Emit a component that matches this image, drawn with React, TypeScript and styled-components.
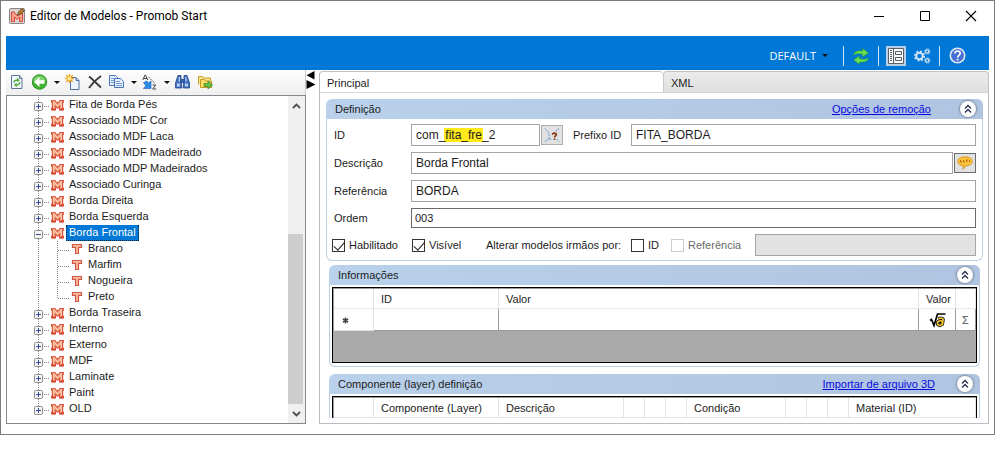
import React from "react";
import styled, { createGlobalStyle } from "styled-components";

const GlobalStyle = createGlobalStyle`
  * { box-sizing: border-box; }
  body {
    margin: 0;
    background: #fff;
    color: #1c1c1c;
    font-family: "Liberation Sans", Arial, sans-serif;
    font-size: 11px;
    line-height: 16px;
  }
  button, input { font: inherit; color: inherit; margin: 0; }
`;

/* ---------- window frame ---------- */

const Window = styled.main`
  display: flex;
  flex-direction: column;
  height: calc(100vh - 20px);
  min-height: 300px;
  margin-right: 8px;
  padding: 0 5px 10px;
  border: 1px solid #7b7b7b;
`;

const TitleBar = styled.header`
  display: flex;
  align-items: center;
  flex: none;
  height: 35px;
  padding: 0 1px 6px 3px;
`;

const Title = styled.h1`
  flex: 1;
  margin: 0 0 0 5px;
  font: 400 12px/16px Roboto, "Open Sans", sans-serif;
  color: #000;
`;

const FrameButton = styled.button`
  display: flex;
  align-items: center;
  justify-content: center;
  width: 46px;
  height: 28px;
  padding: 0;
  border: 0;
  background: transparent;
  &:last-child { width: 34px; margin-left: 6px; }
`;

const CommandBar = styled.div`
  display: flex;
  align-items: center;
  justify-content: flex-end;
  flex: none;
  height: 34px;
  padding: 5px 22px 0 0;
  background: #0078d7;
`;

const CommandButton = styled.button<{ $active?: boolean }>`
  display: flex;
  align-items: center;
  justify-content: center;
  width: 20px;
  height: 20px;
  padding: 0;
  border: 0;
  background: ${(p) => (p.$active ? "#b9cfe6" : "transparent")};
  & + & { margin-left: 6px; }
`;

const ProfileButton = styled.button`
  display: flex;
  align-items: center;
  gap: 6px;
  margin-right: 8px;
  padding: 0;
  border: 0;
  background: transparent;
  color: #fff;
  font: 400 11px/16px "Open Sans", "Noto Sans", sans-serif;
`;

const Separator = styled.span`
  width: 1px;
  height: 20px;
  margin: 0 7px;
  background: #cfe6fa;
`;

const Caret = styled.span`
  width: 0;
  height: 0;
  border: 3px solid transparent;
  border-top-color: #111;
  border-bottom: 0;
`;

const Workspace = styled.div`
  display: flex;
  flex: 1;
  min-height: 0;
`;

/* ---------- model tree ---------- */

const Sidebar = styled.aside`
  display: flex;
  flex-direction: column;
  flex: 0 0 300px;
  min-width: 0;
`;

const Toolbar = styled.div`
  display: flex;
  align-items: center;
  flex: none;
  height: 25px;
  padding: 0 4px 1px;
  border-right: 1px solid #c9c9c9;
  background: linear-gradient(#fdfdfd, #efefef);
`;

const ToolButton = styled.button<{ $menu?: boolean }>`
  display: flex;
  align-items: center;
  justify-content: space-between;
  width: ${(p) => (p.$menu ? "28px" : "16px")};
  height: 20px;
  margin-right: ${(p) => (p.$menu ? "5px" : "6px")};
  padding: 0;
  border: 0;
  background: transparent;
  svg { flex: none; }
`;

const TreeFrame = styled.div`
  display: flex;
  flex: 1;
  min-height: 0;
  border: 1px solid #828790;
`;

const Tree = styled.ul`
  flex: 1;
  min-width: 0;
  margin: 0;
  padding: 1px 0 0 26px;
  overflow: hidden;
  list-style: none;
`;

const TreeRow = styled.li`
  display: flex;
  align-items: center;
  height: 16px;
`;

const TreeLabel = styled.span<{ $selected?: boolean }>`
  margin-left: 2px;
  padding: 0 2px 1px;
  border: 1px dotted ${(p) => (p.$selected ? "#10233a" : "transparent")};
  border-width: 0 1px 1px;
  line-height: 14px;
  background: ${(p) => (p.$selected ? "#0078d7" : "transparent")};
  color: ${(p) => (p.$selected ? "#fff" : "#1c1c1c")};
  white-space: nowrap;
`;

const ScrollBar = styled.div`
  display: flex;
  flex-direction: column;
  flex: 0 0 17px;
  align-items: stretch;
  background: #f0f0f0;
`;

const ScrollArrow = styled.button`
  display: flex;
  align-items: center;
  justify-content: center;
  height: 19px;
  padding: 0;
  border: 0;
  background: transparent;
`;

const ScrollTrack = styled.div`
  display: flex;
  flex-direction: column;
  flex: 1;
  justify-content: flex-end;
  padding-right: 2px;
`;

const ScrollThumb = styled.div`
  height: 59%;
  background: #cdcdcd;
`;

const Splitter = styled.div`
  display: flex;
  flex-direction: column;
  align-items: center;
  flex: 0 0 13px;
  padding: 1px 3px 0 0;
`;

/* ---------- tabs and panels ---------- */

const Content = styled.section`
  display: flex;
  flex-direction: column;
  flex: 1;
  min-width: 0;
  padding-top: 1px;
`;

const TabList = styled.div`
  display: flex;
  flex: none;
  height: 22px;
`;

const Tab = styled.button<{ $active?: boolean }>`
  flex: ${(p) => (p.$active ? "345 0 0" : "325 0 0")};
  padding: 2px 7px 0;
  border: 1px solid #c3c3c3;
  border-bottom-color: #d5d5d5;
  border-left-color: ${(p) => (p.$active ? "#b5bac2" : "#c9c9c9")};
  border-right-width: ${(p) => (p.$active ? "0" : "1px")};
  border-radius: 4px 4px 0 0;
  background: ${(p) => (p.$active ? "#fff" : "linear-gradient(#ececec, #dfdfdf)")};
  text-align: left;
`;

const TabPage = styled.div`
  flex: 1;
  min-height: 0;
  padding: 6px 5px 5px 6px;
  border: 1px solid #b9bdc4;
  border-top: 0;
`;

const ScrollArea = styled.div`
  height: 100%;
  overflow: hidden;
`;

const PanelHeader = styled.header`
  display: flex;
  align-items: center;
  height: 20px;
  padding: 0 7px 0 9px;
  border-radius: 6px 6px 0 0;
  background: linear-gradient(90deg, #b9d1ea, #afc4e0);
`;

const PanelTitle = styled.h2`
  flex: 1;
  margin: 0;
  font-size: 11px;
  font-weight: 400;
`;

const PanelLink = styled.a`
  margin-right: 29px;
  color: #0a0ae0;
`;

const Panel = styled.section<{ $inset?: boolean }>`
  margin: ${(p) => (p.$inset ? "0 3px 7px" : "0 0 4px")};
  ${PanelLink} { margin-right: ${(p) => (p.$inset ? "22px" : "29px")}; }
`;

const CollapseButton = styled.button`
  display: flex;
  align-items: center;
  justify-content: center;
  width: 16px;
  height: 16px;
  padding: 0;
  border: 0;
  border-radius: 50%;
  background: #fff;
  box-shadow: 0 0 2px 1px #7f8ba5;
`;

const FormBody = styled.form`
  display: flex;
  flex-direction: column;
  gap: 6px;
  padding: 5px 6px 4px 5px;
  border: 1px solid #b9cfe6;
  border-top: 0;
  border-radius: 0 0 6px 6px;
`;

const GridBody = styled.div`
  padding: 2px 2px 3px;
  border: 1px solid #b9cfe6;
  border-top: 0;
  border-radius: 0 0 6px 6px;
`;

const FieldRow = styled.div`
  display: flex;
  align-items: center;
`;

const FieldLabel = styled.label<{ $inline?: boolean }>`
  flex: none;
  width: ${(p) => (p.$inline ? "58px" : "79px")};
  margin-left: ${(p) => (p.$inline ? "10px" : "0")};
  padding-left: ${(p) => (p.$inline ? "0" : "2px")};
`;

const TextField = styled.input<{ $narrow?: boolean; $compact?: boolean; $marked?: boolean }>`
  flex: ${(p) => (p.$narrow ? "0 0 129px" : "1")};
  min-width: 0;
  height: ${(p) => (p.$compact ? "20px" : "22px")};
  padding: ${(p) => (p.$compact ? "0 3px" : "0 4px")};
  border: 1px solid ${(p) => (p.$compact ? "#6f6a6a" : "#a7a4a4")};
  border-radius: 0;
  background: ${(p) =>
    p.$marked ? "linear-gradient(#ffe91a, #ffe91a) 32px 3px / 39px 14px no-repeat #fff" : "#fff"};
  font-size: ${(p) => (p.$compact ? "11px" : "12px")};
  &:disabled { background: #e2e2e2; }
`;

const FieldButton = styled.button<{ $dark?: boolean }>`
  display: flex;
  align-items: center;
  justify-content: center;
  flex: none;
  width: 22px;
  height: 20px;
  margin-left: 1px;
  padding: 0;
  border: 1px solid ${(p) => (p.$dark ? "#6d6d6d" : "#adadad")};
  background: #e1e1e1;
`;

const CheckLabel = styled.label<{ $width: number; $muted?: boolean }>`
  display: flex;
  align-items: center;
  gap: 4px;
  flex: none;
  width: ${(p) => p.$width}px;
  color: ${(p) => (p.$muted ? "#6a6a6a" : "#1c1c1c")};
`;

const CheckBox = styled.input`
  appearance: none;
  display: flex;
  justify-content: center;
  width: 13px;
  height: 13px;
  border: 1px solid #333;
  background: #fff;
  &:disabled { border-color: #ccc; }
  &:checked::after {
    content: "";
    width: 5px;
    height: 9px;
    border: solid #222;
    border-width: 0 1px 1px 0;
    transform: rotate(42deg);
  }
`;

const CheckHeading = styled.span`
  flex: none;
  width: 145px;
`;

const GridFrame = styled.div`
  height: 76px;
  overflow: hidden;
  border: 1px solid #000;
  background: #aaa;
`;

const Grid = styled.table`
  width: 100%;
  table-layout: fixed;
  border-collapse: separate;
  border-spacing: 0;
  border-top: 1px solid #9a9a9a;
  border-left: 1px solid #9a9a9a;
  background: #fff;
  th, td {
    padding: 0 7px;
    border-right: 1px solid #e2e2e2;
    border-bottom: 1px solid #e8e8e8;
    text-align: left;
    font-weight: 400;
    white-space: nowrap;
  }
  th { height: 20px; }
  td {
    height: 22px;
    padding: 0;
    border-color: #9c9c9c;
    text-align: center;
  }
  td:first-child {
    padding: 2px 0 0 8px;
    border-color: #e2e2e2;
  }
  td:last-child { color: #555; }
  svg { display: block; }
  td + td svg { margin: 0 auto; }
`;

const Col = styled.col<{ $w?: number }>`
  width: ${(p) => (p.$w ? `${p.$w}px` : "auto")};
`;

/* ---------- icons ---------- */

const AppIcon = () => (
  <svg width="16" height="16" viewBox="0 0 16 16">
    <rect x=".5" y=".5" width="15" height="15" rx="1" fill="#d8d3d0" stroke="#8a8583" />
    <path d="M2.500 13.500V4H5l3 3.500L11 4h2.500v9.500h-3V9L8 11.500 5.500 9v4.500z" fill="#f7a08d" stroke="#dd4636" />
    <path d="M8.500 7.500l1-3.500L13 .5l2.500 2L12 6z" fill="#b07a30" stroke="#5d3a17" strokeWidth=".8" />
  </svg>
);

const MinimizeIcon = () => (
  <svg width="12" height="12" viewBox="0 0 12 12"><path d="M1 6.500h10" stroke="#000" /></svg>
);
const MaximizeIcon = () => (
  <svg width="12" height="12" viewBox="0 0 12 12"><path d="M1.500 1.500h9v9h-9z" fill="none" stroke="#000" /></svg>
);
const CloseIcon = () => (
  <svg width="12" height="12" viewBox="0 0 12 12"><path d="M1 1l10 10M11 1L1 11" stroke="#000" strokeWidth="1.100" /></svg>
);

const SyncIcon = () => (
  <svg width="18" height="18" viewBox="0 0 18 18">
    <g fill="#6be04f" stroke="#1f8a3c" strokeWidth=".6">
      <path d="M1.500 8.500C1.800 4.500 6 3.300 10.500 4V1.300L16.500 6l-6 4V7.200C6.500 6.300 3.800 6.300 1.500 8.500z" />
      <path d="M16.500 10.500c-.3 4-4.500 5.200-9 4.500v2.500L1.500 13l6-4.200v2.800c4 .9 6.700.9 9-1.100z" />
    </g>
  </svg>
);

const FormIcon = () => (
  <svg width="16" height="16" viewBox="0 0 16 16" fill="#fafafa" stroke="#5b5f66">
    <path d="M.5.5h15v15H.5zM5.500.5v15" />
    <path d="M7.500 3.500h6v3h-6zM7.500 9.500h6v3h-6z" />
    <path d="M2 2.500h2M2 4.500h2M2 6.500h2M2 8.500h2M2 10.500h2M2 12.500h2" />
  </svg>
);

const GearsIcon = () => (
  <svg width="17" height="16" viewBox="0 0 17 16" fill="none" stroke="#d3e6f7">
    <circle cx="5.500" cy="8" r="3.300" strokeWidth="2" />
    <circle cx="5.500" cy="8" r="4.700" strokeWidth="1.800" strokeDasharray="1.850 1.840" />
    <circle cx="13.300" cy="3.500" r="1.700" strokeWidth="1.300" />
    <circle cx="13.300" cy="3.500" r="2.700" strokeWidth=".9" strokeDasharray="1.100 1.020" />
    <circle cx="13.300" cy="12.500" r="1.700" strokeWidth="1.300" />
    <circle cx="13.300" cy="12.500" r="2.700" strokeWidth=".9" strokeDasharray="1.100 1.020" />
  </svg>
);

const HelpIcon = () => (
  <svg width="17" height="17" viewBox="0 0 17 17">
    <circle cx="8.500" cy="8.500" r="7.200" fill="#4470d6" stroke="#dfe6f2" strokeWidth="1.600" />
    <path d="M5.800 6.600C5.800 3 11.400 3.300 11.200 6.400 11 8.400 8.600 8.300 8.600 10.400M8.600 11.800v1.700" fill="none" stroke="#fff" strokeWidth="1.700" />
  </svg>
);

const RefreshPageIcon = () => (
  <svg width="16" height="16" viewBox="0 0 16 16">
    <path d="M1.500 1.500h8l2.500 3v10H1.500z" fill="#f1f7ff" stroke="#5f7695" />
    <path d="M9.500 1.500v3H12" fill="none" stroke="#5f7695" />
    <path d="M4 8.500c0-2 1.500-2.500 3.500-2.300M9.800 8c0 2-1.500 3.200-3.500 2.800" fill="none" stroke="#49a832" strokeWidth="1.400" />
    <path d="M7 3.800l2.700 2.400L7 8.200zM6.700 8.800L4 11l2.700 2.300z" fill="#49a832" />
  </svg>
);

const BackIcon = () => (
  <svg width="16" height="16" viewBox="0 0 16 16">
    <circle cx="7.500" cy="8" r="7.300" fill="#3fb52f" stroke="#24871d" strokeWidth=".8" />
    <path d="M1.500 7a6 5 0 0 1 12 0z" fill="#83d570" />
    <path d="M2 8l5.500-5v3.200H12.500v3.600h-5V13z" fill="#fff" />
  </svg>
);

const NewPageIcon = () => (
  <svg width="16" height="16" viewBox="0 0 16 16">
    <path d="M5.500 3.500h5.500l3 3v9H5.500z" fill="#edf4fc" stroke="#5270a0" />
    <path d="M11 3.500v3h3" fill="#b8cce8" stroke="#5270a0" />
    <path d="M4.500 0v9M0 4.500h9M1.300 1.300l6.400 6.400M7.700 1.300L1.300 7.700" stroke="#f0a321" strokeWidth="1.500" />
    <circle cx="4.500" cy="4.500" r="2" fill="#ffe487" />
  </svg>
);

const DeleteIcon = () => (
  <svg width="16" height="16" viewBox="0 0 16 16">
    <path d="M2 2.500c4 3 8 7.500 12 11M14 2C9.500 5 5 9.500 2 14" fill="none" stroke="#3c3c3c" strokeWidth="1.900" />
  </svg>
);

const CopyIcon = () => (
  <svg width="16" height="16" viewBox="0 0 16 16" fill="#e5effb" stroke="#4a74b8">
    <path d="M.5 1.500h6l2 2v8h-8z" />
    <path d="M2 4.500h4M2 6.500h4M2 8.500h4" stroke="#7ba0d6" />
    <path d="M5.500 4.500h6l3 3v6h-9z" />
    <path d="M7 7.500h4M7 9.500h6M7 11.500h6" stroke="#7ba0d6" />
  </svg>
);

const SortIcon = () => (
  <svg width="16" height="16" viewBox="0 0 16 16">
    <path d="M.8 6L3 1h.5l2.200 5M2 4.500h3" fill="none" stroke="#444" />
    <path d="M10.500 11h3.200l-3 4h3.500" fill="none" stroke="#444" />
    <path d="M6.500 3l6 6" stroke="#444" strokeDasharray="1.500 1" />
    <path d="M1.500 8.500L5 7l1.500 2L9 7v7.500H1.500l2.300-2.700z" fill="#2f8be8" stroke="#1c5fb4" strokeWidth=".6" />
  </svg>
);

const BinocularsIcon = () => (
  <svg width="16" height="16" viewBox="0 0 16 16" fill="#4272c0" stroke="#1e4184" strokeWidth=".8">
    <path d="M3 1.500h3v3.500l.8 9H.5V9zM9 1.500h3L14.500 9v5H8.200l.8-9z" />
    <path d="M6 5.500h3v3H6z" />
    <path d="M2 9.500h2.800v3H2zM10 9.500h2.800v3H10zM3.800 3H5v4.500H3.800zM10.300 3h1.200v4.500h-1.200z" fill="#bcd5f5" stroke="none" />
  </svg>
);

const FolderIcon = () => (
  <svg width="16" height="16" viewBox="0 0 16 16">
    <path d="M1.500 10.500v-8h4l1 1.500h7v2" fill="#fbe78f" stroke="#c79a25" />
    <path d="M3.500 13.500v-8h4l1 1.500h6v6.500z" fill="#fcdf68" stroke="#c79a25" />
    <path d="M7 9.500h4V7l4.700 4-4.700 4v-2.500H7z" fill="#67c043" stroke="#37842a" strokeWidth=".7" />
  </svg>
);

const ModelIcon = () => (
  <svg width="13" height="13" viewBox="0 0 13 13">
    <path
      d="M.6 11V9.300h.8V3.200H.6V1.500h3.200l2.700 3 2.700-3h3.200v1.700h-.8v6.100h.8V11H8.600V7L6.500 9.200 4.400 7v4z"
      fill="#fac29c"
      stroke="#dc5544"
      strokeWidth="1.200"
    />
    <path d="M1 10.400h3.200M8.800 10.400H12" stroke="#d2402f" strokeWidth="1.600" />
  </svg>
);

const MaterialIcon = () => (
  <svg width="12" height="12" viewBox="0 0 12 12">
    <path d="M1.500 1.500h9v2.800H7.500v6.200h-3V4.300h-3z" fill="#fbbd9b" stroke="#cd5847" strokeWidth="1.200" />
  </svg>
);

type BranchKind = "closed" | "open" | "child" | "lastChild";

/* Dotted guide lines, with the plus/minus box on expandable nodes. */
const Branch = ({ kind, last }: { kind: BranchKind; last?: boolean }) => {
  const child = kind === "child" || kind === "lastChild";
  const width = child ? 38 : 18;
  return (
    <svg width={width} height="16" viewBox={`0 0 ${width} 16`} fill="none" stroke="#858585">
      {!child || kind ? <path d={last ? "M5.500 0v9" : "M5.500 0v16"} strokeDasharray="1 1" /> : null}
      {child ? (
        <path
          d={kind === "child" ? "M24.500 0v16M25 9.500h11" : "M24.500 0v9M25 9.500h11"}
          strokeDasharray="1 1"
        />
      ) : (
        <>
          <path d="M11 9.500h6" strokeDasharray="1 1" />
          <rect x="1.500" y="5.500" width="8" height="8" rx="1" fill="#f5f5f5" stroke="#8d8d8d" />
          <path d={kind === "closed" ? "M3 9.500h5M5.500 7v5" : "M3 9.500h5"} stroke="#34498f" />
        </>
      )}
    </svg>
  );
};

const ScrollChevron = ({ down }: { down?: boolean }) => (
  <svg width="9" height="8" viewBox="0 0 9 8">
    <path d={down ? "M1 2l3.500 3.500L8 2" : "M1 6l3.500-3.500L8 6"} fill="none" stroke="#505050" strokeWidth="1.800" />
  </svg>
);

const CollapseIcon = () => (
  <svg width="8" height="10" viewBox="0 0 8 10">
    <path d="M1 4.500l3-3 3 3M1 8.500l3-3 3 3" fill="none" stroke="#26304f" strokeWidth="1.300" />
  </svg>
);

const SplitterArrows = () => (
  <svg width="10" height="18" viewBox="0 0 10 18">
    <path d="M8.500 0v8.500L.5 4.300zM.5 9l9 4.500-9 4.500z" fill="#000" />
  </svg>
);

const FormulaHelpIcon = () => (
  <svg width="16" height="16" viewBox="0 0 16 16" fill="none">
    <path d="M1 1.500l4 4.500v6M1 14.500l4-2.500h3M15 1.500L11 5M12.500 12l2.500 2.500" stroke="#4a86d0" strokeDasharray="1.500 1" />
    <path d="M8.500 7.800C8.500 5.500 12.500 5.500 12.300 7.800 12 9 10.500 9 10.500 10.600M10.500 11.500v1.500" stroke="#8a3a14" strokeWidth="1.700" />
  </svg>
);

const BalloonIcon = () => (
  <svg width="16" height="14" viewBox="0 0 16 14">
    <path d="M8 .8c4.500 0 7.300 1.700 7.300 4.500S12.500 9.800 9 9.800L6 13.200 6.300 9.800C3 9.500.7 8 .7 5.300S3.500.8 8 .8z" fill="#fcc237" stroke="#cf8a1e" strokeWidth=".8" />
    <path d="M3.500 4v2h1.500M6.500 4v2H8M9.500 6V4H11M12.500 4v2" fill="none" stroke="#b5651a" strokeWidth=".9" />
  </svg>
);

const RootIcon = () => (
  <svg width="17" height="16" viewBox="0 0 17 16" fill="none">
    <path d="M1 8.500l1.500-1L5 13.500 8.500 2h8" stroke="#000" strokeWidth="1.700" />
    <ellipse cx="11" cy="11" rx="2.600" ry="2.200" stroke="#000" strokeWidth="3.400" transform="rotate(-25 11 11)" />
    <path d="M9.500 6.800c2-1.200 5-.8 4.600 1.200l-1 5.300" stroke="#000" strokeWidth="3.200" />
    <ellipse cx="11" cy="11" rx="2.600" ry="2.200" stroke="#f1c332" strokeWidth="1.600" transform="rotate(-25 11 11)" />
    <path d="M9.500 6.800c2-1.200 5-.8 4.600 1.200l-1 5.300" stroke="#f1c332" strokeWidth="1.600" />
    <path d="M10.300 11.400l1.600-.9" stroke="#000" strokeWidth="1.200" />
  </svg>
);

const NewRowIcon = () => (
  <svg width="7" height="7" viewBox="0 0 7 7">
    <path d="M3.500 .5v6M.9 2l5.200 3M6.100 2L.9 5" stroke="#444" strokeWidth="1.600" />
  </svg>
);

/* ---------- data ---------- */

type Node = { label: string; kind: BranchKind; selected?: boolean };

const nodes: Node[] = [
  { label: "Fita de Borda Pés", kind: "closed" },
  { label: "Associado MDF Cor", kind: "closed" },
  { label: "Associado MDF Laca", kind: "closed" },
  { label: "Associado MDF Madeirado", kind: "closed" },
  { label: "Associado MDP Madeirados", kind: "closed" },
  { label: "Associado Curinga", kind: "closed" },
  { label: "Borda Direita", kind: "closed" },
  { label: "Borda Esquerda", kind: "closed" },
  { label: "Borda Frontal", kind: "open", selected: true },
  { label: "Branco", kind: "child" },
  { label: "Marfim", kind: "child" },
  { label: "Nogueira", kind: "child" },
  { label: "Preto", kind: "lastChild" },
  { label: "Borda Traseira", kind: "closed" },
  { label: "Interno", kind: "closed" },
  { label: "Externo", kind: "closed" },
  { label: "MDF", kind: "closed" },
  { label: "Laminate", kind: "closed" },
  { label: "Paint", kind: "closed" },
  { label: "OLD", kind: "closed" },
];

const tools: { name: string; icon: React.ReactNode; menu?: boolean }[] = [
  { name: "Atualizar", icon: <RefreshPageIcon /> },
  { name: "Voltar", icon: <BackIcon />, menu: true },
  { name: "Novo", icon: <NewPageIcon /> },
  { name: "Excluir", icon: <DeleteIcon /> },
  { name: "Copiar", icon: <CopyIcon />, menu: true },
  { name: "Ordenar", icon: <SortIcon />, menu: true },
  { name: "Localizar", icon: <BinocularsIcon /> },
  { name: "Importar", icon: <FolderIcon /> },
];

const layerColumns: { title: string; width?: number }[] = [
  { title: "", width: 40 },
  { title: "Componente (Layer)", width: 125 },
  { title: "Descrição", width: 125 },
  { title: "", width: 21 },
  { title: "", width: 21 },
  { title: "", width: 21 },
  { title: "Condição", width: 99 },
  { title: "", width: 21 },
  { title: "", width: 21 },
  { title: "", width: 21 },
  { title: "Material (ID)" },
];

/* ---------- sections ---------- */

const Collapse = () => (
  <CollapseButton type="button" aria-label="Recolher"><CollapseIcon /></CollapseButton>
);

const ModelTree = () => (
  <Sidebar>
    <Toolbar>
      {tools.map((t) => (
        <ToolButton key={t.name} type="button" aria-label={t.name} $menu={t.menu}>
          {t.icon}
          {t.menu && <Caret />}
        </ToolButton>
      ))}
    </Toolbar>
    <TreeFrame>
      <Tree>
        {nodes.map((n, i) => (
          <TreeRow key={n.label}>
            <Branch kind={n.kind} last={i === nodes.length - 1} />
            {n.kind === "closed" || n.kind === "open" ? <ModelIcon /> : <MaterialIcon />}
            <TreeLabel $selected={n.selected}>{n.label}</TreeLabel>
          </TreeRow>
        ))}
      </Tree>
      <ScrollBar>
        <ScrollArrow type="button" aria-label="Rolar para cima"><ScrollChevron /></ScrollArrow>
        <ScrollTrack><ScrollThumb /></ScrollTrack>
        <ScrollArrow type="button" aria-label="Rolar para baixo"><ScrollChevron down /></ScrollArrow>
      </ScrollBar>
    </TreeFrame>
  </Sidebar>
);

const DefinitionPanel = () => (
  <Panel>
    <PanelHeader>
      <PanelTitle>Definição</PanelTitle>
      <PanelLink href="#remocao">Opções de remoção</PanelLink>
      <Collapse />
    </PanelHeader>
    <FormBody>
      <FieldRow>
        <FieldLabel htmlFor="model-id">ID</FieldLabel>
        <TextField id="model-id" defaultValue="com_fita_fre_2" $narrow $marked />
        <FieldButton type="button" aria-label="Gerar ID"><FormulaHelpIcon /></FieldButton>
        <FieldLabel htmlFor="prefix" $inline>Prefixo ID</FieldLabel>
        <TextField id="prefix" defaultValue="FITA_BORDA" />
      </FieldRow>
      <FieldRow>
        <FieldLabel htmlFor="description">Descrição</FieldLabel>
        <TextField id="description" defaultValue="Borda Frontal" />
        <FieldButton type="button" aria-label="Traduções" $dark><BalloonIcon /></FieldButton>
      </FieldRow>
      <FieldRow>
        <FieldLabel htmlFor="reference">Referência</FieldLabel>
        <TextField id="reference" defaultValue="BORDA" />
      </FieldRow>
      <FieldRow>
        <FieldLabel htmlFor="order">Ordem</FieldLabel>
        <TextField id="order" defaultValue="003" $compact />
      </FieldRow>
      <FieldRow>
        <CheckLabel $width={80}><CheckBox type="checkbox" defaultChecked />Habilitado</CheckLabel>
        <CheckLabel $width={74}><CheckBox type="checkbox" defaultChecked />Visível</CheckLabel>
        <CheckHeading>Alterar modelos irmãos por:</CheckHeading>
        <CheckLabel $width={40}><CheckBox type="checkbox" />ID</CheckLabel>
        <CheckLabel $width={84} $muted><CheckBox type="checkbox" disabled />Referência</CheckLabel>
        <TextField aria-label="Valor da referência" disabled />
      </FieldRow>
    </FormBody>
  </Panel>
);

const InfoPanel = () => (
  <Panel $inset>
    <PanelHeader>
      <PanelTitle>Informações</PanelTitle>
      <Collapse />
    </PanelHeader>
    <GridBody>
      <GridFrame>
        <Grid>
          <colgroup><Col $w={40} /><Col $w={125} /><Col /><Col $w={37} /><Col $w={20} /></colgroup>
          <thead>
            <tr><th /><th>ID</th><th>Valor</th><th>Valor</th><th /></tr>
          </thead>
          <tbody>
            <tr><td><NewRowIcon /></td><td /><td /><td><RootIcon /></td><td>Σ</td></tr>
          </tbody>
        </Grid>
      </GridFrame>
    </GridBody>
  </Panel>
);

const LayerPanel = () => (
  <Panel $inset>
    <PanelHeader>
      <PanelTitle>Componente (layer) definição</PanelTitle>
      <PanelLink href="#importar">Importar de arquivo 3D</PanelLink>
      <Collapse />
    </PanelHeader>
    <GridBody>
      <GridFrame>
        <Grid>
          <colgroup>{layerColumns.map((c, i) => <Col key={i} $w={c.width} />)}</colgroup>
          <thead>
            <tr>{layerColumns.map((c, i) => <th key={i}>{c.title}</th>)}</tr>
          </thead>
        </Grid>
      </GridFrame>
    </GridBody>
  </Panel>
);

export default function App() {
  return (
    <>
      <GlobalStyle />
      <Window>
        <TitleBar>
          <AppIcon />
          <Title>Editor de Modelos - Promob Start</Title>
          <FrameButton aria-label="Minimizar"><MinimizeIcon /></FrameButton>
          <FrameButton aria-label="Maximizar"><MaximizeIcon /></FrameButton>
          <FrameButton aria-label="Fechar"><CloseIcon /></FrameButton>
        </TitleBar>
        <CommandBar>
          <ProfileButton>DEFAULT<Caret /></ProfileButton>
          <Separator />
          <CommandButton aria-label="Sincronizar"><SyncIcon /></CommandButton>
          <Separator />
          <CommandButton aria-label="Formulário" $active><FormIcon /></CommandButton>
          <CommandButton aria-label="Configurações"><GearsIcon /></CommandButton>
          <Separator />
          <CommandButton aria-label="Ajuda"><HelpIcon /></CommandButton>
        </CommandBar>
        <Workspace>
          <ModelTree />
          <Splitter><SplitterArrows /></Splitter>
          <Content>
            <TabList role="tablist">
              <Tab role="tab" aria-selected $active>Principal</Tab>
              <Tab role="tab" aria-selected={false}>XML</Tab>
            </TabList>
            <TabPage>
              <ScrollArea>
                <DefinitionPanel />
                <InfoPanel />
                <LayerPanel />
              </ScrollArea>
            </TabPage>
          </Content>
        </Workspace>
      </Window>
    </>
  );
}
